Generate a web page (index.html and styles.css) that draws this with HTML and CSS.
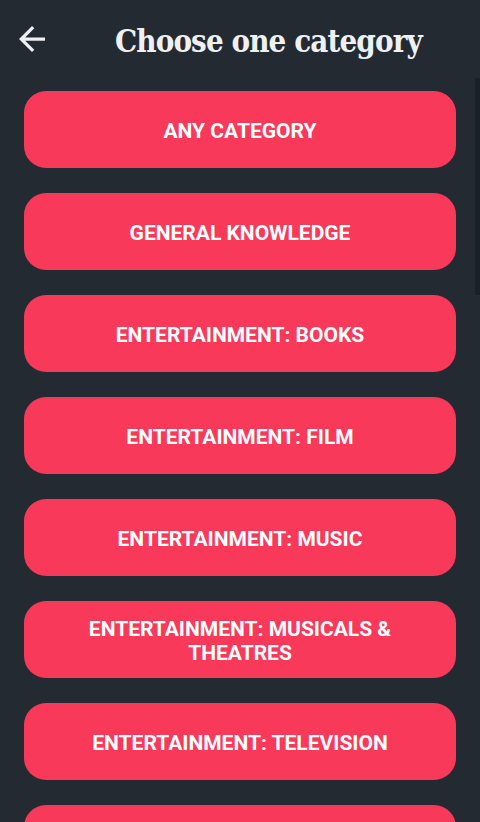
FILE: index.html
```html
<!DOCTYPE html>
<html>
<head>
<meta charset="utf-8">
<link rel="stylesheet" href="styles.css">
</head>
<body>
<div class="app">
  <header class="bar">
    <svg class="back" viewBox="4 4 16 16" width="26" height="26"><path fill="#eef0f2" d="M20 11H7.83l5.59-5.59L12 4l-8 8 8 8 1.41-1.41L7.83 13H20v-2z"/></svg>
    <h1 class="title">Choose one category</h1>
  </header>
  <main class="list">
    <div class="btn">ANY CATEGORY</div>
    <div class="btn">GENERAL KNOWLEDGE</div>
    <div class="btn">ENTERTAINMENT: BOOKS</div>
    <div class="btn">ENTERTAINMENT: FILM</div>
    <div class="btn">ENTERTAINMENT: MUSIC</div>
    <div class="btn">ENTERTAINMENT: MUSICALS &amp;<br>THEATRES</div>
    <div class="btn">ENTERTAINMENT: TELEVISION</div>
    <div class="btn">ENTERTAINMENT: VIDEO GAMES</div>
    <div class="thumb"></div>
  </main>
</div>
</body>
</html>
```
FILE: styles.css
```css
html, body {
  margin: 0;
  padding: 0;
  background: #232a32;
  height: 100%;
  overflow: hidden;
}
.app {
  width: 480px;
  height: 822px;
  display: flex;
  flex-direction: column;
}
.bar {
  height: 78px;
  flex: none;
  display: flex;
  align-items: center;
  padding-left: 19px;
  box-sizing: border-box;
}
.back {
  display: block;
  margin-top: 0;
}
.title {
  margin: 3px 0 0 70px;
  font-family: "DejaVu Serif Condensed", "DejaVu Serif", serif;
  font-stretch: condensed;
  font-weight: bold;
  font-size: 31px;
  color: #eef0f2;
  letter-spacing: -0.9px;
  white-space: nowrap;
}
.list {
  position: relative;
  flex: 1;
  overflow: hidden;
  display: flex;
  flex-direction: column;
  gap: 25px;
  padding: 13px 24px 0 24px;
}
.btn {
  flex: none;
  height: 77px;
  border-radius: 22px;
  background: #f8395a;
  color: #ffffff;
  font-family: Roboto, sans-serif;
  font-weight: 700;
  font-size: 21px;
  line-height: 24px;
  padding-top: 2px;
  box-sizing: border-box;
  text-align: center;
  display: flex;
  align-items: center;
  justify-content: center;
}
.thumb {
  position: absolute;
  right: 0;
  top: 0;
  width: 5px;
  height: 217px;
  background: #1b2027;
}
```
